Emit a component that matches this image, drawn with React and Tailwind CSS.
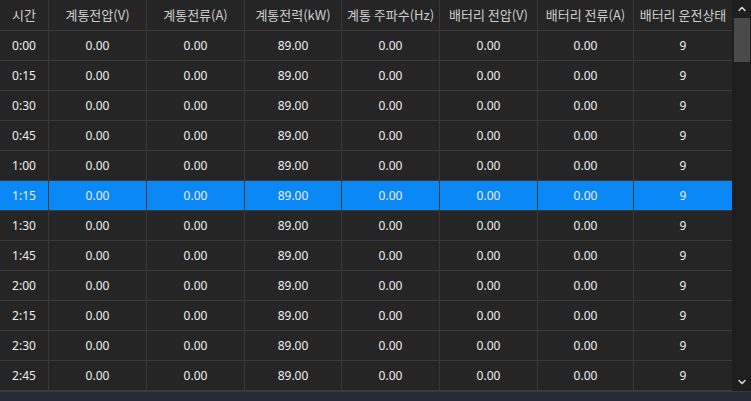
import { ChevronUp, ChevronDown } from 'lucide-react'

const headers = [
  '시간',
  '계통전압(V)',
  '계통전류(A)',
  '계통전력(kW)',
  '계통 주파수(Hz)',
  '배터리 전압(V)',
  '배터리 전류(A)',
  '배터리 운전상태',
]

const times = ['0:00', '0:15', '0:30', '0:45', '1:00', '1:15', '1:30', '1:45', '2:00', '2:15', '2:30', '2:45']

const cols = 'grid grid-cols-[49px_98px_98px_97px_98px_98px_96px_98px]'

export default function App() {
  return (
    <div className="flex h-[401px] w-[751px] flex-col overflow-hidden bg-[#262a36]">
      <div className="flex h-[392px] border-b border-[#3a3a3a] bg-[#252525]">
        <div className="w-[732px] shrink-0">
          <div className={`${cols} h-[31px] border-b border-[#3a3a3a]`}>
            {headers.map((h) => (
              <div
                key={h}
                className="flex items-center justify-center overflow-hidden whitespace-nowrap border-r border-[#3a3a3a] text-[13px] text-[#cdcdcd] last:border-r-0 [font-family:'Noto_Sans_CJK_KR','Noto_Sans',sans-serif]"
              >
                {h}
              </div>
            ))}
          </div>
          {times.map((t) => {
            const sel = t === '1:15'
            const vals = [t, '0.00', '0.00', '89.00', '0.00', '0.00', '0.00', '9']
            return (
              <div key={t} className={`${cols} h-[30px] border-b border-[#3a3a3a] ${sel ? 'bg-[#0a88f5]' : ''}`}>
                {vals.map((v, i) => (
                  <div
                    key={i}
                    className="flex items-center justify-center border-r border-[#3a3a3a] text-[12px] text-[#eeeeee] last:border-r-0 [font-family:'Noto_Sans',sans-serif]"
                  >
                    {v}
                  </div>
                ))}
              </div>
            )
          })}
        </div>
        <div className="flex w-[19px] flex-col items-center bg-[#1e1e1e]">
          <div className="flex h-[18px] w-full items-center justify-center">
            <ChevronUp size={12} strokeWidth={3} className="text-[#d8d8d8]" />
          </div>
          <div className="h-[44px] w-[16px] bg-[#4a4a4a]" />
          <div className="flex-1" />
          <div className="flex h-[18px] w-full items-center justify-center">
            <ChevronDown size={12} strokeWidth={3} className="text-[#d8d8d8]" />
          </div>
        </div>
      </div>
    </div>
  )
}
